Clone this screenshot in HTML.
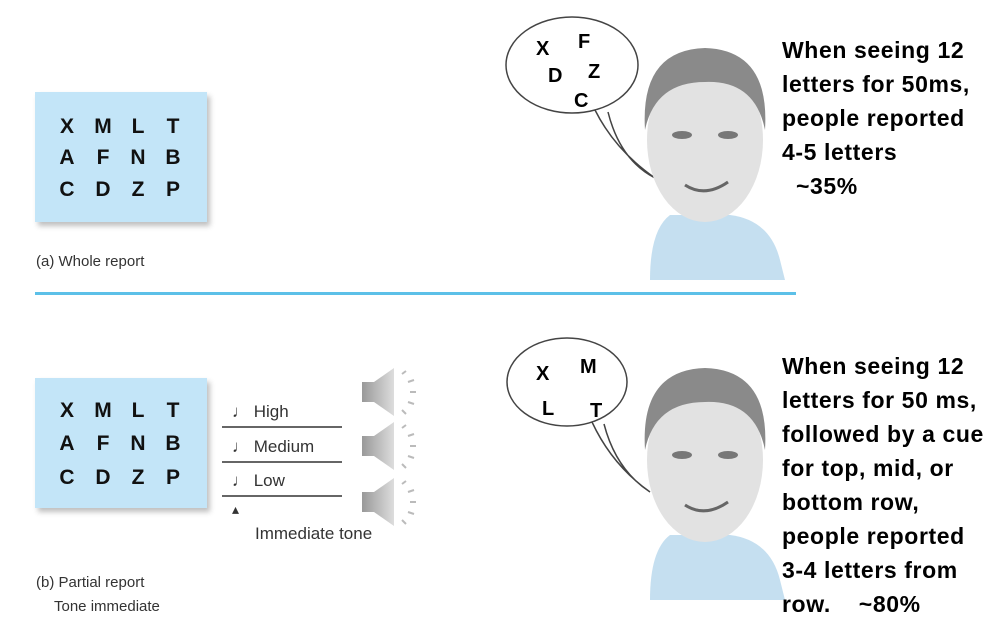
<!DOCTYPE html>
<html><head><meta charset="utf-8"><style>
body{margin:0;width:999px;height:628px;background:#fff;position:relative;overflow:hidden;font-family:"Liberation Sans",sans-serif}
.a{position:absolute}
.box{position:absolute;background:#c3e5f8;box-shadow:3px 4px 5px rgba(0,0,0,.25);width:172px;height:130px}
.L{position:absolute;font-weight:bold;font-size:21px;color:#111;width:24px;text-align:center}
.cap{position:absolute;font-size:15px;color:#333}
.rt{position:absolute;left:782px;font-weight:bold;font-size:23px;letter-spacing:.6px;line-height:34px;color:#000;white-space:pre}
</style></head><body>
<div class="box" style="left:35px;top:92px"></div>
<div class="box" style="left:35px;top:378px"></div>
<div class="L" style="left:55px;top:115px">X</div><div class="L" style="left:91px;top:115px">M</div><div class="L" style="left:126px;top:115px">L</div><div class="L" style="left:161px;top:115px">T</div>
<div class="L" style="left:55px;top:146px">A</div><div class="L" style="left:91px;top:146px">F</div><div class="L" style="left:126px;top:146px">N</div><div class="L" style="left:161px;top:146px">B</div>
<div class="L" style="left:55px;top:178px">C</div><div class="L" style="left:91px;top:178px">D</div><div class="L" style="left:126px;top:178px">Z</div><div class="L" style="left:161px;top:178px">P</div>
<div class="L" style="left:55px;top:399px">X</div><div class="L" style="left:91px;top:399px">M</div><div class="L" style="left:126px;top:399px">L</div><div class="L" style="left:161px;top:399px">T</div>
<div class="L" style="left:55px;top:432px">A</div><div class="L" style="left:91px;top:432px">F</div><div class="L" style="left:126px;top:432px">N</div><div class="L" style="left:161px;top:432px">B</div>
<div class="L" style="left:55px;top:466px">C</div><div class="L" style="left:91px;top:466px">D</div><div class="L" style="left:126px;top:466px">Z</div><div class="L" style="left:161px;top:466px">P</div>

<div class="cap" style="left:36px;top:253px">(a) Whole report</div>
<div class="a" style="left:35px;top:292px;width:761px;height:3px;background:#5cc0e8"></div>
<div class="cap" style="left:36px;top:574px">(b) Partial report</div>
<div class="cap" style="left:54px;top:598px">Tone immediate</div>

<div class="a" style="left:222px;top:426px;width:120px;height:2px;background:#666"></div>
<div class="a" style="left:222px;top:461px;width:120px;height:2px;background:#666"></div>
<div class="a" style="left:222px;top:495px;width:120px;height:2px;background:#666"></div>
<div class="cap" style="left:232px;top:402px;font-size:17px">♩ High</div>
<div class="cap" style="left:232px;top:437px;font-size:17px">♩ Medium</div>
<div class="cap" style="left:232px;top:471px;font-size:17px">♩ Low</div>
<div class="cap" style="left:232px;top:501px;font-size:14px">▴</div>
<div class="cap" style="left:255px;top:524px;font-size:17px">Immediate tone</div>
<svg class="a" style="left:358px;top:368px" width="70" height="170">
<defs><linearGradient id="sp" x1="0" x2="1"><stop offset="0" stop-color="#999"/><stop offset="1" stop-color="#ddd"/></linearGradient></defs>
<g fill="url(#sp)"><path d="M4 14h12l20-14v48l-20-14H4z"/><path d="M4 68h12l20-14v48l-20-14H4z"/><path d="M4 124h12l20-14v48l-20-14H4z"/></g>
<g stroke="#bbb" stroke-width="2" fill="none"><path d="M44 6l4-3M50 14l6-2M52 24h6M50 34l6 2M44 42l4 4"/><path d="M44 60l4-3M50 68l6-2M52 78h6M50 88l6 2M44 96l4 4"/><path d="M44 116l4-3M50 124l6-2M52 134h6M50 144l6 2M44 152l4 4"/></g>
</svg>

<svg class="a" style="left:500px;top:10px" width="290" height="280">
<ellipse cx="72" cy="55" rx="66" ry="48" fill="#fff" stroke="#444" stroke-width="1.5"/>
<path d="M95 100 Q115 140 155 168 Q120 150 108 102" fill="#fff" stroke="#444" stroke-width="1.5"/>
<text x="36" y="45" font-family="Liberation Sans" font-weight="bold" font-size="20">X</text>
<text x="78" y="38" font-family="Liberation Sans" font-weight="bold" font-size="20">F</text>
<text x="48" y="72" font-family="Liberation Sans" font-weight="bold" font-size="20">D</text>
<text x="88" y="68" font-family="Liberation Sans" font-weight="bold" font-size="20">Z</text>
<text x="74" y="97" font-family="Liberation Sans" font-weight="bold" font-size="20">C</text>
<path d="M150 270 Q150 220 170 205 L230 205 Q270 210 280 250 L285 270Z" fill="#c5dff0"/>
<ellipse cx="205" cy="130" rx="58" ry="82" fill="#e2e2e2"/>
<path d="M145 120 Q140 40 205 38 Q270 40 265 120 Q255 70 205 72 Q155 72 145 120Z" fill="#8a8a8a"/>
<ellipse cx="182" cy="125" rx="10" ry="4" fill="#777"/><ellipse cx="228" cy="125" rx="10" ry="4" fill="#777"/>
<path d="M185 175 Q205 188 228 172" stroke="#666" stroke-width="3" fill="none"/>
</svg>
<svg class="a" style="left:500px;top:330px" width="290" height="280">
<ellipse cx="67" cy="52" rx="60" ry="44" fill="#fff" stroke="#444" stroke-width="1.5"/>
<path d="M92 92 Q112 135 150 162 Q116 140 104 94" fill="#fff" stroke="#444" stroke-width="1.5"/>
<text x="36" y="50" font-family="Liberation Sans" font-weight="bold" font-size="20">X</text>
<text x="80" y="43" font-family="Liberation Sans" font-weight="bold" font-size="20">M</text>
<text x="42" y="85" font-family="Liberation Sans" font-weight="bold" font-size="20">L</text>
<text x="90" y="87" font-family="Liberation Sans" font-weight="bold" font-size="20">T</text>
<path d="M150 270 Q150 220 170 205 L230 205 Q270 210 280 250 L285 270Z" fill="#c5dff0"/>
<ellipse cx="205" cy="130" rx="58" ry="82" fill="#e2e2e2"/>
<path d="M145 120 Q140 40 205 38 Q270 40 265 120 Q255 70 205 72 Q155 72 145 120Z" fill="#8a8a8a"/>
<ellipse cx="182" cy="125" rx="10" ry="4" fill="#777"/><ellipse cx="228" cy="125" rx="10" ry="4" fill="#777"/>
<path d="M185 175 Q205 188 228 172" stroke="#666" stroke-width="3" fill="none"/>
</svg>

<div class="rt" style="top:33px">When seeing 12
letters for 50ms,
people reported
4-5 letters
  ~35%</div>
<div class="rt" style="top:349px">When seeing 12
letters for 50 ms,
followed by a cue
for top, mid, or
bottom row,
people reported
3-4 letters from
row.    ~80%</div>
</body></html>
